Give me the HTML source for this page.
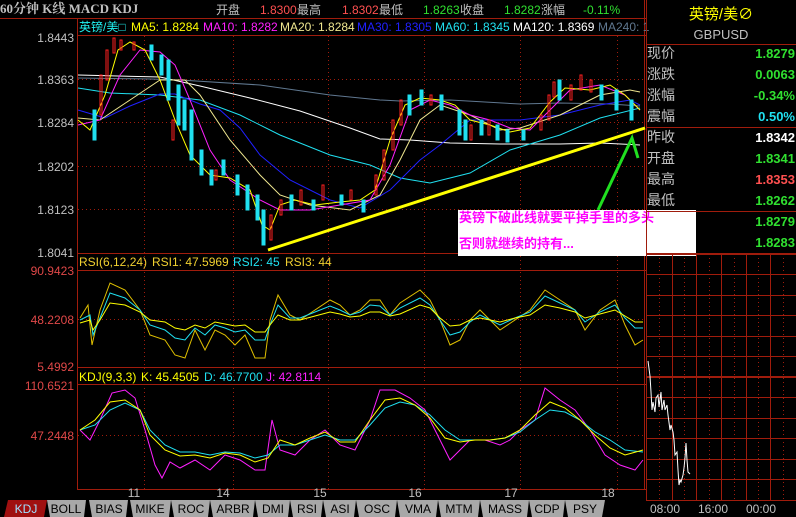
<!DOCTYPE html>
<html><head><meta charset="utf-8">
<style>
html,body{margin:0;padding:0;background:#000;}
body{width:796px;height:517px;overflow:hidden;position:relative;font-family:"Liberation Sans","Noto Sans CJK SC",sans-serif;}
svg{position:absolute;left:0;top:0;}
text{font-family:"Liberation Sans","Noto Sans CJK SC",sans-serif;}
</style></head><body>
<svg width="796" height="517" viewBox="0 0 796 517">
<text x="0" y="13" font-size="13" font-weight="bold" fill="#c0c0c0" style="font-family:'Liberation Serif','Noto Serif CJK SC',serif">60分钟 K线 MACD KDJ</text>
<text x="216" y="14" font-size="12" fill="#c0c0c0">开盘</text>
<text x="260" y="14" font-size="12" fill="#ff5050">1.8300</text><text x="297" y="14" font-size="12" fill="#c0c0c0">最高</text>
<text x="342" y="14" font-size="12" fill="#ff5050">1.8302</text><text x="379" y="14" font-size="12" fill="#c0c0c0">最低</text>
<text x="423" y="14" font-size="12" fill="#30e030">1.8263</text><text x="460" y="14" font-size="12" fill="#c0c0c0">收盘</text>
<text x="504" y="14" font-size="12" fill="#30e030">1.8282</text><text x="541" y="14" font-size="12" fill="#c0c0c0">涨幅</text>
<text x="583" y="14" font-size="12" fill="#30e030">-0.11%</text>
<g stroke="#a01c0c" fill="none" stroke-width="1">
<line x1="0" y1="18.5" x2="646" y2="18.5"/>
<line x1="77.5" y1="18" x2="77.5" y2="489"/>
<line x1="77" y1="35.5" x2="646" y2="35.5"/>
<line x1="77" y1="253.5" x2="646" y2="253.5"/>
<line x1="77" y1="270.5" x2="646" y2="270.5"/>
<line x1="77" y1="367.5" x2="646" y2="367.5"/>
<line x1="77" y1="384.5" x2="646" y2="384.5"/>
<line x1="77" y1="489.5" x2="646" y2="489.5"/>
<line x1="644.5" y1="0" x2="644.5" y2="489"/>
</g>
<g stroke="#a01c0c" stroke-dasharray="1,3" stroke-width="1">
<line x1="144.5" y1="36" x2="144.5" y2="489"/><line x1="233.5" y1="36" x2="233.5" y2="489"/>
<line x1="328.5" y1="36" x2="328.5" y2="489"/><line x1="424.5" y1="36" x2="424.5" y2="489"/>
<line x1="520.5" y1="36" x2="520.5" y2="489"/><line x1="617.5" y1="36" x2="617.5" y2="489"/>
<line x1="78" y1="79.5" x2="644" y2="79.5"/><line x1="78" y1="122.5" x2="644" y2="122.5"/>
<line x1="78" y1="166.5" x2="644" y2="166.5"/><line x1="78" y1="209.5" x2="644" y2="209.5"/>
<line x1="78" y1="319.5" x2="644" y2="319.5"/><line x1="78" y1="435.5" x2="644" y2="435.5"/>
</g>
<g font-size="12" text-anchor="end">
<text x="74" y="42" fill="#c0c0c0">1.8443</text>
<text x="74" y="84" fill="#c0c0c0">1.8363</text>
<text x="74" y="127" fill="#c0c0c0">1.8284</text>
<text x="74" y="171" fill="#c0c0c0">1.8202</text>
<text x="74" y="214" fill="#c0c0c0">1.8123</text>
<text x="74" y="257" fill="#c0c0c0">1.8041</text>
<text x="74" y="275" fill="#e04848">90.9423</text>
<text x="74" y="324" fill="#e04848">48.2208</text>
<text x="74" y="371" fill="#e04848">5.4992</text>
<text x="74" y="390" fill="#e04848">110.6521</text>
<text x="74" y="440" fill="#e04848">47.2448</text>
</g>
<g font-size="12" fill="#c0c0c0" text-anchor="middle">
<text x="134" y="497">11</text><text x="223" y="497">14</text><text x="320" y="497">15</text>
<text x="415" y="497">16</text><text x="511" y="497">17</text><text x="608" y="497">18</text>
</g>
<g font-size="12">
<text x="79" y="31" fill="#20f0f0">英镑/美□</text>
<text x="131" y="31" fill="#ffff00">MA5: 1.8284</text>
<text x="203" y="31" fill="#ff20ff">MA10: 1.8282</text>
<text x="280" y="31" fill="#f0e890">MA20: 1.8284</text>
<text x="357" y="31" fill="#2020ff">MA30: 1.8305</text>
<text x="435" y="31" fill="#20e0f0">MA60: 1.8345</text>
<text x="513" y="31" fill="#ffffff">MA120: 1.8369</text>
<text x="598" y="31" fill="#607890">MA240: 1</text>
</g>
<g fill="none" stroke-width="1">
<polyline stroke="#607890" points="78,78 150,79 180,80 260,85 330,95 380,100 400,101 450,100 520,104 560,103 610,104 640,106"/>
<polyline stroke="#ffffff" points="78,75 160,77 200,86 250,98 300,111 350,128 380,139 410,140 450,143 500,144 560,144 600,143 640,145"/>
<polyline stroke="#20e0f0" points="78,88 110,93 160,95 200,100 240,115 280,135 330,155 370,165 400,178 430,183 470,173 510,150 560,135 600,118 640,108"/>
<polyline stroke="#2020ff" points="78,110 105,118 130,106 160,94 175,94 200,104 220,110 240,128 260,155 290,180 330,200 360,208 390,190 420,160 440,145 470,120 500,120 520,120 560,115 600,105 630,100 640,105"/>
<polyline stroke="#f0e890" points="78,118 100,120 130,100 160,80 185,80 200,95 230,140 260,175 280,195 310,205 350,210 380,195 400,160 420,120 440,105 470,115 500,130 520,128 560,115 600,95 630,90 640,92"/>
<polyline stroke="#ff20ff" points="78,125 100,120 120,75 140,50 160,52 175,65 190,100 210,150 230,180 260,200 280,210 310,210 340,205 370,200 390,165 410,110 430,100 450,105 470,115 490,120 510,128 530,130 550,110 570,90 600,85 625,95 640,110"/>
<polyline stroke="#ffff00" points="78,120 90,130 105,95 118,50 130,42 145,50 160,80 175,120 190,155 210,175 230,178 250,190 262,225 270,230 280,205 295,200 315,205 340,202 360,200 375,190 390,140 405,105 420,98 440,100 455,105 470,120 490,125 510,132 530,128 550,102 565,88 590,90 610,85 625,95 640,110"/>
</g>
<g stroke-width="1">
<g fill="#20e0f0" stroke="#20e0f0">
<rect x="93" y="110" width="3" height="30"/><rect x="150" y="45" width="3" height="15"/><rect x="160" y="55" width="3" height="20"/>
<rect x="167" y="60" width="3" height="40"/><rect x="177" y="85" width="3" height="40"/><rect x="183" y="100" width="3" height="30"/>
<rect x="190" y="110" width="3" height="50"/><rect x="200" y="150" width="3" height="25"/><rect x="210" y="170" width="3" height="15"/>
<rect x="222" y="160" width="3" height="15"/><rect x="236" y="175" width="3" height="20"/><rect x="246" y="185" width="3" height="25"/>
<rect x="256" y="195" width="3" height="25"/><rect x="262" y="210" width="3" height="35"/><rect x="290" y="195" width="3" height="15"/>
<rect x="312" y="200" width="3" height="10"/><rect x="340" y="195" width="3" height="10"/><rect x="362" y="200" width="3" height="12"/>
<rect x="408" y="95" width="3" height="20"/><rect x="420" y="90" width="3" height="15"/><rect x="440" y="95" width="3" height="15"/>
<rect x="458" y="110" width="3" height="25"/><rect x="464" y="120" width="3" height="20"/><rect x="480" y="120" width="3" height="15"/>
<rect x="496" y="125" width="3" height="15"/><rect x="506" y="130" width="3" height="12"/><rect x="522" y="130" width="3" height="10"/>
<rect x="558" y="80" width="3" height="20"/><rect x="600" y="85" width="3" height="15"/><rect x="615" y="90" width="3" height="20"/><rect x="630" y="100" width="3" height="20"/>
</g>
<g fill="none" stroke="#ff2020">
<rect x="100" y="75" width="2" height="40"/><rect x="106" y="50" width="2" height="30"/><rect x="113" y="38" width="2" height="15"/>
<rect x="120" y="40" width="2" height="10"/><rect x="133" y="42" width="2" height="8"/><rect x="172" y="120" width="2" height="20"/>
<rect x="215" y="170" width="2" height="10"/><rect x="270" y="215" width="2" height="25"/><rect x="280" y="200" width="2" height="15"/>
<rect x="300" y="190" width="2" height="15"/><rect x="322" y="185" width="2" height="15"/><rect x="350" y="190" width="2" height="10"/>
<rect x="375" y="175" width="2" height="20"/><rect x="383" y="150" width="2" height="30"/><rect x="392" y="120" width="2" height="30"/>
<rect x="400" y="100" width="2" height="25"/><rect x="430" y="95" width="2" height="10"/><rect x="470" y="125" width="2" height="15"/>
<rect x="488" y="120" width="2" height="15"/><rect x="540" y="115" width="2" height="15"/><rect x="548" y="95" width="2" height="25"/>
<rect x="553" y="82" width="2" height="15"/><rect x="570" y="85" width="2" height="15"/><rect x="580" y="75" width="2" height="15"/><rect x="590" y="80" width="2" height="12"/>
</g>
</g>
<line x1="268" y1="250" x2="645" y2="128" stroke="#ffff00" stroke-width="3"/>
<polyline points="598,210 632,138 638,158" fill="none" stroke="#20e020" stroke-width="3"/>
<rect x="458" y="210" width="238" height="46" fill="#fff"/>
<text x="459" y="222" font-size="13" font-weight="bold" fill="#ff00ff">英镑下破此线就要平掉手里的多头</text>
<text x="459" y="248" font-size="13" font-weight="bold" fill="#ff00ff">否则就继续的持有...</text>
<text x="79" y="266" font-size="12" fill="#f0d030">RSI(6,12,24)</text>
<text x="152" y="266" font-size="12" fill="#f0d030">RSI1: 47.5969</text>
<text x="233" y="266" font-size="12" fill="#20e0f0">RSI2: 45</text>
<text x="285" y="266" font-size="12" fill="#f0d030">RSI3: 44</text>
<g fill="none" stroke-width="1">
<polyline stroke="#e0c000" points="80,318 88,305 92,345 100,310 110,283 125,290 140,310 150,335 165,340 175,355 185,358 195,330 205,350 215,330 225,335 235,345 245,335 255,358 265,358 270,320 278,295 290,315 300,320 315,310 330,300 340,305 350,315 360,310 370,300 380,300 390,315 400,303 420,290 430,300 440,320 450,345 460,340 470,320 480,310 490,320 500,330 515,320 530,310 545,290 560,300 575,310 585,330 600,310 615,300 625,325 635,345 643,340"/>
<polyline stroke="#20e0f0" points="80,320 90,315 93,335 100,318 110,293 125,298 140,310 150,325 165,330 175,338 185,340 195,328 205,335 215,325 225,328 235,332 245,330 255,340 265,340 270,325 278,305 290,318 300,318 315,312 330,306 340,310 350,315 360,312 370,305 380,306 390,315 400,308 420,298 430,305 440,320 450,335 460,332 470,322 480,315 490,320 500,325 515,318 530,312 545,296 560,303 575,310 585,322 600,312 615,305 625,318 635,328 643,328"/>
<polyline stroke="#ffff00" points="80,323 90,320 93,330 100,320 110,303 125,305 140,312 150,320 165,322 175,328 185,330 195,325 205,328 215,322 225,324 235,326 245,325 255,332 265,332 270,325 278,315 290,320 300,320 315,316 330,312 340,314 350,317 360,316 370,312 380,312 390,316 400,314 420,305 430,308 440,318 450,326 460,325 470,320 480,318 490,320 500,322 515,318 530,315 545,305 560,308 575,312 585,318 600,314 615,310 625,316 635,322 643,322"/>
</g>
<text x="79" y="381" font-size="12" fill="#ffff00">KDJ(9,3,3)</text>
<text x="141" y="381" font-size="12" fill="#ffff00">K: 45.4505</text>
<text x="204" y="381" font-size="12" fill="#20e0f0">D: 46.7700</text>
<text x="266" y="381" font-size="12" fill="#ff20ff">J: 42.8114</text>
<g fill="none" stroke-width="1">
<polyline stroke="#ff20ff" points="80,430 90,440 100,420 112,393 125,390 135,398 145,430 155,465 162,478 170,462 180,468 195,460 210,470 225,455 240,460 255,470 265,470 272,420 280,450 295,455 310,440 325,430 340,445 355,450 370,420 380,390 395,390 410,398 425,410 440,440 450,460 460,450 470,440 485,440 500,445 510,440 520,430 535,420 545,388 560,400 575,410 590,430 605,455 620,465 635,470 643,460"/>
<polyline stroke="#20e0f0" points="80,430 95,425 110,410 125,403 140,410 150,430 165,445 180,452 195,452 210,455 225,452 240,453 255,458 268,455 280,445 295,445 310,440 325,435 340,440 355,440 370,425 385,408 400,402 415,405 430,415 445,430 460,440 475,440 490,440 505,438 520,432 535,420 550,410 565,412 580,420 595,432 610,440 625,450 643,452"/>
<polyline stroke="#ffff00" points="80,430 95,420 110,402 125,400 140,410 150,435 165,450 180,456 195,455 210,458 225,453 240,455 255,462 268,458 280,440 295,445 310,438 325,432 340,442 355,442 370,420 385,400 400,398 415,405 430,418 445,438 460,442 475,440 490,440 505,438 520,430 535,415 550,402 565,408 580,420 595,435 610,448 625,455 643,450"/>
</g>
<g stroke="#a01c0c" fill="none">
<line x1="646.5" y1="0" x2="646.5" y2="500"/>
<line x1="646" y1="44.5" x2="796" y2="44.5"/>
<line x1="646" y1="127.5" x2="796" y2="127.5"/>
<line x1="646" y1="211.5" x2="796" y2="211.5"/>
<line x1="646" y1="254" x2="796" y2="254" stroke-width="2"/>
<line x1="646" y1="377" x2="796" y2="377" stroke-width="2"/>
</g>
<text x="721" y="19" font-size="15" fill="#ffff00" text-anchor="middle">英镑/美∅</text>
<text x="721" y="39" font-size="13" fill="#c0c0c0" text-anchor="middle">GBPUSD</text>
<g font-size="14" fill="#c0c0c0">
<text x="647" y="58">现价</text><text x="647" y="79">涨跌</text><text x="647" y="100">涨幅</text><text x="647" y="121">震幅</text>
<text x="647" y="142">昨收</text><text x="647" y="163">开盘</text><text x="647" y="184">最高</text><text x="647" y="205">最低</text>
</g>
<g font-size="13" font-weight="bold" text-anchor="end">
<text x="795" y="58" fill="#30e030">1.8279</text><text x="795" y="79" fill="#30e030">0.0063</text>
<text x="795" y="100" fill="#30e030">-0.34%</text><text x="795" y="121" fill="#20e0f0">0.50%</text>
<text x="795" y="142" fill="#ffffff">1.8342</text><text x="795" y="163" fill="#30e030">1.8341</text>
<text x="795" y="184" fill="#ff5050">1.8353</text><text x="795" y="205" fill="#30e030">1.8262</text>
<text x="795" y="226" fill="#30e030">1.8279</text><text x="795" y="247" fill="#30e030">1.8283</text>
</g>
<g stroke="#a01c0c">
<line x1="646" y1="274.5" x2="796" y2="274.5"/><line x1="646" y1="295.5" x2="796" y2="295.5"/>
<line x1="646" y1="315.5" x2="796" y2="315.5"/><line x1="646" y1="336.5" x2="796" y2="336.5"/>
<line x1="646" y1="356.5" x2="796" y2="356.5"/><line x1="646" y1="397.5" x2="796" y2="397.5"/>
<line x1="646" y1="418.5" x2="796" y2="418.5"/><line x1="646" y1="438.5" x2="796" y2="438.5"/>
<line x1="646" y1="459.5" x2="796" y2="459.5"/><line x1="646" y1="479.5" x2="796" y2="479.5"/>
<line x1="646" y1="500.5" x2="796" y2="500.5"/>
<line x1="672.5" y1="254" x2="672.5" y2="500"/><line x1="696.5" y1="254" x2="696.5" y2="500"/>
<line x1="721.5" y1="254" x2="721.5" y2="500"/><line x1="746.5" y1="254" x2="746.5" y2="500"/>
<line x1="770.5" y1="254" x2="770.5" y2="500"/>
</g>
<g stroke="#a01c0c" stroke-dasharray="1,3">
<line x1="659.5" y1="254" x2="659.5" y2="500"/><line x1="684.5" y1="254" x2="684.5" y2="500"/>
<line x1="709.5" y1="254" x2="709.5" y2="500"/><line x1="734.5" y1="254" x2="734.5" y2="500"/>
<line x1="758.5" y1="254" x2="758.5" y2="500"/><line x1="783.5" y1="254" x2="783.5" y2="500"/>
</g>
<polyline fill="none" stroke="#fff" points="648,361 650,376 651,392 652,410 653,402 655,412 656,398 658,395 659,407 661,392 662,410 664,400 665,410 667,405 668,415 670,430 671,425 673,432 674,440 675,455 677,452 678,470 679,485 680,480 681,482 683,475 684,468 685,458 686,443 687,460 688,472 690,474"/>
<g font-size="12" fill="#c0c0c0">
<text x="650" y="513">08:00</text><text x="698" y="513">16:00</text><text x="746" y="513">00:00</text>
</g>
<g font-size="12" text-anchor="middle">
<polygon points="8,500 47,500 44,517 4,517" fill="#a01010"/>
<text x="26" y="513" fill="#a0e0ff">KDJ</text>
</g>
<g font-size="12" fill="#000" text-anchor="middle">
<polygon points="47,500 86,500 84,517 50,517" fill="#a8a8a8"/><text x="66" y="513">BOLL</text>
<polygon points="89,500 128,500 126,517 92,517" fill="#a8a8a8"/><text x="109" y="513">BIAS</text>
<polygon points="130,500 171,500 169,517 133,517" fill="#a8a8a8"/><text x="150" y="513">MIKE</text>
<polygon points="171,500 210,500 208,517 174,517" fill="#a8a8a8"/><text x="191" y="513">ROC</text>
<polygon points="210,500 255,500 253,517 213,517" fill="#a8a8a8"/><text x="233" y="513">ARBR</text>
<polygon points="255,500 290,500 288,517 258,517" fill="#a8a8a8"/><text x="273" y="513">DMI</text>
<polygon points="290,500 323,500 321,517 293,517" fill="#a8a8a8"/><text x="307" y="513">RSI</text>
<polygon points="323,500 356,500 354,517 326,517" fill="#a8a8a8"/><text x="340" y="513">ASI</text>
<polygon points="356,500 397,500 395,517 359,517" fill="#a8a8a8"/><text x="377" y="513">OSC</text>
<polygon points="397,500 438,500 436,517 400,517" fill="#a8a8a8"/><text x="418" y="513">VMA</text>
<polygon points="438,500 480,500 478,517 441,517" fill="#a8a8a8"/><text x="459" y="513">MTM</text>
<polygon points="480,500 529,500 527,517 483,517" fill="#a8a8a8"/><text x="505" y="513">MASS</text>
<polygon points="529,500 565,500 563,517 532,517" fill="#a8a8a8"/><text x="547" y="513">CDP</text>
<polygon points="565,500 605,500 602,517 568,517" fill="#a8a8a8"/><text x="585" y="513">PSY</text>
</g>
</svg>
</body></html>
